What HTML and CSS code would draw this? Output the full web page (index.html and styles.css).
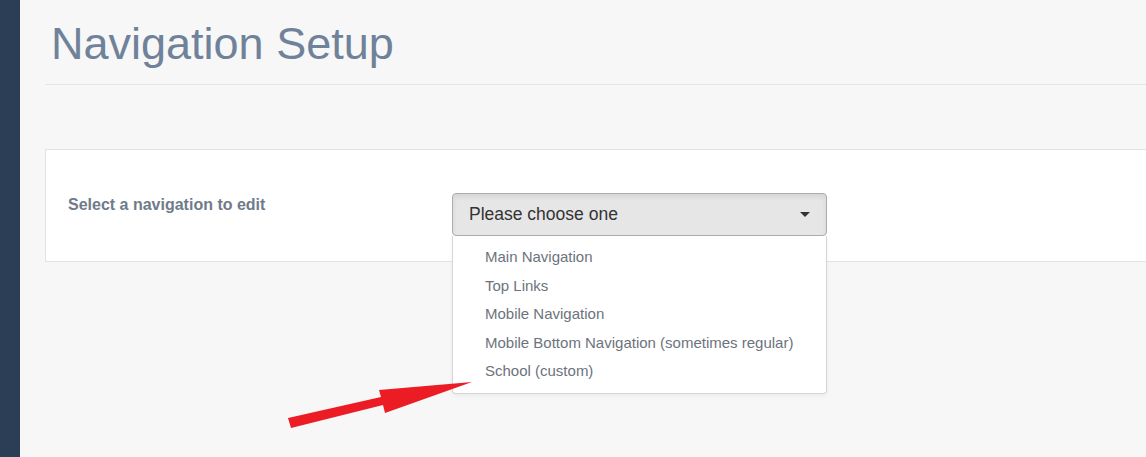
FILE: index.html
```html
<!DOCTYPE html>
<html>
<head>
<meta charset="utf-8">
<link rel="stylesheet" href="styles.css">
</head>
<body>
<div class="app">
  <aside class="sidebar"></aside>
  <main class="content">
    <h1 class="title">Navigation Setup</h1>
    <div class="divider"></div>
    <section class="panel">
      <label class="label">Select a navigation to edit</label>
      <div class="select-wrap">
        <div class="select">
          <span>Please choose one</span>
          <span class="caret"></span>
        </div>
        <ul class="menu">
          <li>Main Navigation</li>
          <li>Top Links</li>
          <li>Mobile Navigation</li>
          <li>Mobile Bottom Navigation (sometimes regular)</li>
          <li>School (custom)</li>
        </ul>
      </div>
    </section>
  </main>
</div>
<svg class="arrow" width="1146" height="457" viewBox="0 0 1146 457">
  <polygon points="288,418 381,397 379,390 472,382 385,413 383,405 291,428" fill="#ec1c24"/>
</svg>
</body>
</html>
```
FILE: styles.css
```css
html, body {
  margin: 0;
  padding: 0;
}
body {
  width: 1146px;
  height: 457px;
  overflow: hidden;
  background: #f7f7f7;
  font-family: "Liberation Sans", Arial, sans-serif;
  position: relative;
}
.app {
  display: flex;
  height: 457px;
}
.sidebar {
  width: 20px;
  flex: none;
  background: #2c3e55;
}
.content {
  flex: 1;
  padding-left: 25px;
}
.title {
  margin: 0;
  padding: 18px 0 0 6px;
  font-size: 45px;
  font-weight: normal;
  line-height: 52px;
  color: #6f8299;
}
.divider {
  margin-top: 14px;
  height: 1px;
  background: #e3e5e8;
}
.panel {
  margin-top: 64px;
  height: 111px;
  background: #fff;
  border: 1px solid #e3e3e3;
  border-right: none;
  display: flex;
  align-items: flex-start;
}
.label {
  margin: 45px 0 0 22px;
  width: 384px;
  font-size: 16px;
  font-weight: bold;
  color: #6f7b8b;
  line-height: 20px;
}
.select-wrap {
  position: relative;
  margin-top: 43px;
  width: 375px;
}
.select {
  height: 43px;
  box-sizing: border-box;
  border: 1px solid #adadad;
  border-radius: 4px;
  background: #e6e6e6;
  box-shadow: inset 0 3px 5px rgba(0,0,0,0.08);
  display: flex;
  align-items: center;
  justify-content: space-between;
  padding: 0 16px 0 16px;
  font-size: 17.5px;
  color: #333;
}
.caret {
  width: 0;
  height: 0;
  border-left: 5px solid transparent;
  border-right: 5px solid transparent;
  border-top: 5px solid #333;
}
.menu {
  position: absolute;
  left: 0;
  top: 43px;
  width: 375px;
  box-sizing: border-box;
  margin: 0;
  padding: 7px 0 7px 0;
  list-style: none;
  background: #fff;
  border: 1px solid #d6d6d6;
  border-top: none;
  border-radius: 0 0 4px 4px;
  box-shadow: 0 2px 4px rgba(0,0,0,0.05);
}
.menu li {
  padding-left: 32px;
  font-size: 15px;
  line-height: 28.6px;
  color: #6c737c;
}
.arrow {
  position: absolute;
  left: 0;
  top: 0;
  pointer-events: none;
}
```
